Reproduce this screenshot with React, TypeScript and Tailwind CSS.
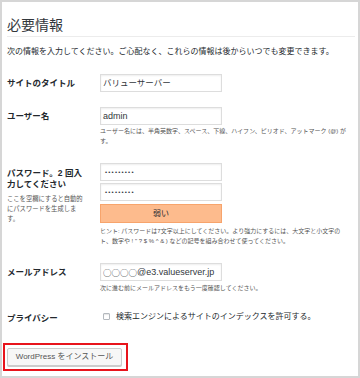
const sans = 'font-["Liberation_Sans","Noto_Sans_CJK_JP",sans-serif]';

const Field = ({ value, className = '' }: { value: React.ReactNode; className?: string }) => (
  <div
    className={`h-[18px] w-[122px] border border-[#dddddd] bg-white px-[2px] flex items-center text-[8.5px] leading-none text-[#32373c] shadow-[inset_0_1px_2px_rgba(0,0,0,0.07)] whitespace-nowrap overflow-hidden ${className}`}
  >
    {value}
  </div>
);

const Dots = () => (
  <div className="h-[18px] w-[122px] border border-[#dddddd] bg-white px-[4px] flex items-center shadow-[inset_0_1px_2px_rgba(0,0,0,0.07)]">
    <span className="text-[6px] leading-none tracking-[1.2px] text-[#32373c]">•••••••••</span>
  </div>
);

export default function App() {
  return (
    <div className={`w-[360px] h-[378px] border-2 border-[#d6d6d6] bg-white overflow-hidden text-[#23282d] ${sans}`}>
      <div className="pl-[5px] pr-[3px]">
        <h1 className="pt-[15px] pb-[3px] border-b border-[#ececec] text-[14px] leading-[16px] font-normal text-[#32373c]">
          必要情報
        </h1>
        <p className="mt-[10px] text-[8px] leading-[10px] whitespace-nowrap">
          次の情報を入力してください。ご心配なく、これらの情報は後からいつでも変更できます。
        </p>

        {/* サイトのタイトル */}
        <div className="mt-[17px] flex items-center">
          <div className="w-[93px] shrink-0 text-[8.5px] font-bold leading-[11px]">サイトのタイトル</div>
          <Field value="バリューサーバー" />
        </div>

        {/* ユーザー名 */}
        <div className="mt-[15px] flex">
          <div className="w-[93px] shrink-0 h-[18px] flex items-center text-[8.5px] font-bold leading-[11px]">ユーザー名</div>
          <div>
            <Field value="admin" className="text-[9px]" />
            <div className="mt-[1px] text-[6px] leading-[10px] text-[#555] whitespace-nowrap">
              <div>ユーザー名には、半角英数字、スペース、下線、ハイフン、ピリオド、アットマーク (@) が</div>
              <div>す。</div>
            </div>
          </div>
        </div>

        {/* パスワード */}
        <div className="mt-[17px] flex">
          <div className="w-[93px] shrink-0">
            <div className="mt-[5px] text-[8.5px] font-bold leading-[11px]">
              <div>パスワード。2 回入</div>
              <div>力してください</div>
            </div>
            <div className="mt-[4px] text-[6.3px] leading-[10px] text-[#555] whitespace-nowrap">
              <div>ここを空欄にすると自動的</div>
              <div>にパスワードを生成しま</div>
              <div>す。</div>
            </div>
          </div>
          <div>
            <Dots />
            <div className="mt-[2px]">
              <Dots />
            </div>
            <div className="mt-[3px] h-[19px] w-[122px] border border-[#f7a46c] bg-[#fdbb8d] flex items-center justify-center text-[8px] text-[#23282d]">
              弱い
            </div>
            <div className="mt-[3px] text-[6px] leading-[10px] text-[#555] whitespace-nowrap">
              <div>ヒント: パスワードは7文字以上にしてください。より強力にするには、大文字と小文字の</div>
              <div>ト、数字や ! " ? $ % ^ &amp; ) などの記号を組み合わせて使ってください。</div>
            </div>
          </div>
        </div>

        {/* メールアドレス */}
        <div className="mt-[17px] flex">
          <div className="w-[93px] shrink-0 h-[18px] flex items-center text-[8.5px] font-bold leading-[11px]">メールアドレス</div>
          <div>
            <Field
              value={
                <>
                  <span className='font-["Noto_Sans_CJK_JP",sans-serif] text-[8.5px]'>○○○○</span>
                  <span>@e3.valueserver.jp</span>
                </>
              }
              className="text-[9px]"
            />
            <div className="mt-[2px] text-[6px] leading-[10px] text-[#555] whitespace-nowrap">
              次に進む前にメールアドレスをもう一度確認してください。
            </div>
          </div>
        </div>

        {/* プライバシー */}
        <div className="mt-[18px] flex items-center">
          <div className="w-[93px] shrink-0 translate-y-[2px] text-[8.5px] font-bold leading-[11px]">プライバシー</div>
          <div className="flex items-center">
            <span className="ml-[3px] w-[7px] h-[7px] border border-[#b4b9be] rounded-[1px] bg-white shadow-[inset_0_1px_1px_rgba(0,0,0,0.1)]" />
            <span className="ml-[6px] text-[8px] leading-[10px] whitespace-nowrap">
              検索エンジンによるサイトのインデックスを許可する。
            </span>
          </div>
        </div>

        {/* install button */}
        <div className="mt-[21px] -ml-[4px] w-[125px] border-2 border-[#e8141c] pt-[3px] pb-[3px] pl-[2px] pr-[4px]">
          <button className="block h-[18px] w-[115px] border border-[#cccccc] bg-[#f7f7f7] rounded-[2px] shadow-[0_1px_0_#cccccc] text-[8px] leading-none text-[#555] whitespace-nowrap">
            WordPress をインストール
          </button>
        </div>
      </div>
    </div>
  );
}
